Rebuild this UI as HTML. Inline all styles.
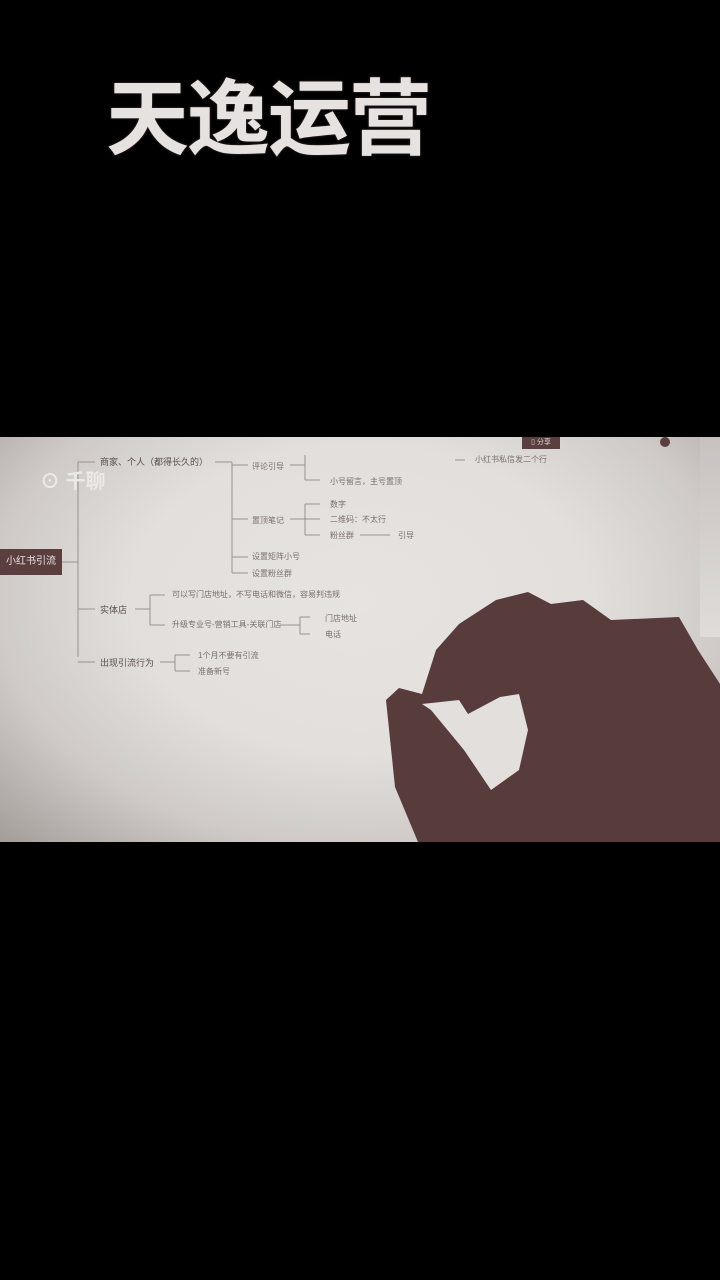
<!DOCTYPE html>
<html><head><meta charset="utf-8"><style>
html,body{margin:0;padding:0;background:#000;width:720px;height:1280px;overflow:hidden;position:relative;font-family:"Liberation Sans","Noto Sans CJK SC",sans-serif}
.title{position:absolute;left:106px;top:78px;font-size:83px;font-weight:bold;color:#e6e2e0;letter-spacing:-2px;line-height:1;text-shadow:0 0 2px #5a3e3e}
.video{position:absolute;left:0;top:437px;width:720px;height:405px;overflow:hidden;background:radial-gradient(ellipse at 50% 40%,#e6e3e1 0%,#e2dfdc 45%,#cfcac7 72%,#a39d9a 100%)}
.t{position:absolute;font-size:8px;color:#7a6f6c;white-space:nowrap}
.b{font-size:9px;color:#5a4e4c}
.root{position:absolute;left:0;top:549px;width:62px;height:26px;background:#5a3f3e;color:#e8e2e0;font-size:10px;line-height:26px;text-align:center}
</style></head><body>
<div class="title">天逸运营</div>
<div class="video">
<svg width="720" height="405" style="position:absolute;left:0;top:0" fill="none" stroke="#9b918e" stroke-width="1">
<path d="M62 125 H78 M78 25 V220 M78 25 H95 M78 172 H95 M78 225 H95"/>
<path d="M215 25 H232 M232 25 V136 M232 28 H248 M232 82 H248 M232 120 H248 M232 136 H248"/>
<path d="M290 28 H305 M305 18 V43 M305 43 H320 M290 82 H305 M305 67 V98 M305 67 H320 M305 82 H320 M305 98 H320 M360 98 H390"/>
<path d="M135 172 H150 M150 158 V188 M150 158 H165 M150 188 H165 M280 188 H300 M300 180 V197 M300 180 H310 M300 197 H310"/>
<path d="M160 225 H175 M175 218 V234 M175 218 H190 M175 234 H190 M455 23 H465"/>
</svg>
<div class="t" style="left:40px;top:28px;font-size:20px;color:#ece9e7;font-weight:bold">⊙ 千聊</div>
<div class="t b" style="left:100px;top:18px">商家、个人（都得长久的）</div>
<div class="t" style="left:252px;top:24px">评论引导</div>
<div class="t" style="left:330px;top:39px">小号留言，主号置顶</div>
<div class="t" style="left:330px;top:62px">数字</div>
<div class="t" style="left:330px;top:77px">二维码：不太行</div>
<div class="t" style="left:330px;top:93px">粉丝群</div>
<div class="t" style="left:398px;top:93px">引导</div>
<div class="t" style="left:252px;top:78px">置顶笔记</div>
<div class="t" style="left:252px;top:114px">设置矩阵小号</div>
<div class="t" style="left:252px;top:131px">设置粉丝群</div>
<div class="t b" style="left:100px;top:166px">实体店</div>
<div class="t" style="left:172px;top:152px">可以写门店地址，不写电话和微信，容易判违规</div>
<div class="t" style="left:172px;top:182px">升级专业号-营销工具-关联门店</div>
<div class="t" style="left:325px;top:176px">门店地址</div>
<div class="t" style="left:325px;top:192px">电话</div>
<div class="t b" style="left:100px;top:219px">出现引流行为</div>
<div class="t" style="left:198px;top:213px">1个月不要有引流</div>
<div class="t" style="left:198px;top:229px">准备新号</div>
<div class="t" style="left:475px;top:17px">小红书私信发二个行</div>
<div style="position:absolute;left:522px;top:0;width:38px;height:12px;background:#5a3f3e;color:#ddd;font-size:7px;line-height:12px;text-align:center">▯ 分享</div>
<div style="position:absolute;left:660px;top:0;width:10px;height:10px;border-radius:50%;background:#5a3f3e"></div>
<div style="position:absolute;left:700px;top:0;width:20px;height:200px;background:linear-gradient(#c8c2bf,#e0dcda)"></div>
</div>
<div class="root" style="top:549px">小红书引流</div>
<svg width="720" height="1280" style="position:absolute;left:0;top:0">
<polygon fill="#573c3b" points="418,842 395,787 386,700 399,688 422,694 436,650 459,624 496,600 528,592 551,604 583,600 611,620 679,617 698,650 720,684 720,842"/>
<polygon fill="#e2dfdc" points="422,704 459,700 468,714 500,697 519,694 528,730 519,770 491,790 464,750 431,710"/>
</svg>
</body></html>
